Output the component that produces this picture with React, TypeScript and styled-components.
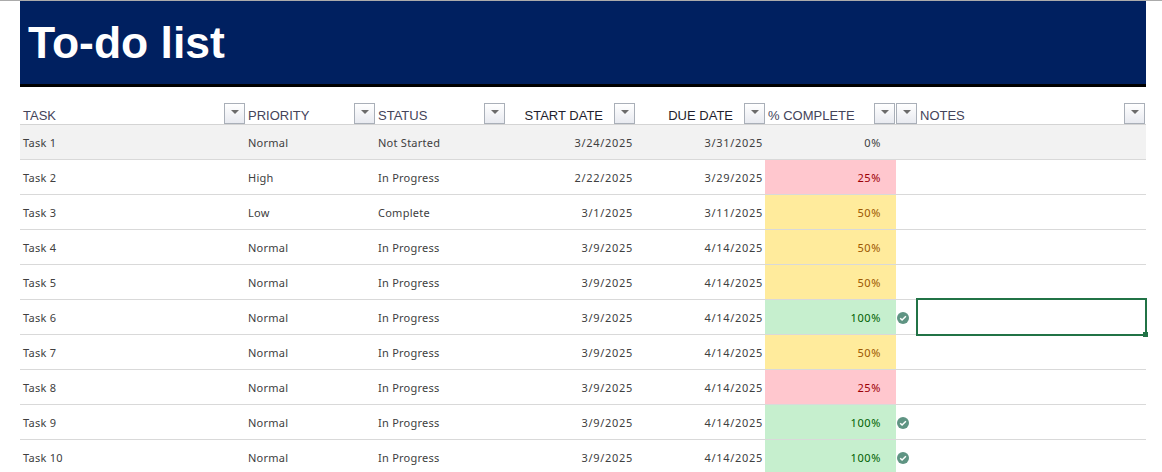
import React from 'react'
import styled, { createGlobalStyle } from 'styled-components'

const GlobalStyle = createGlobalStyle`
  html, body {
    margin: 0;
    padding: 0;
    background: #fff;
    overflow: hidden;
  }
`

const columns = '225px 130px 130px 130px 130px 131px 21px 229px'

const Page = styled.div`
  width: 1162px;
  height: 472px;
  overflow: hidden;
  background: #fff;
  border-top: 1px solid #ababab;
  box-sizing: border-box;
  position: relative;
`

const Sheet = styled.div`
  width: 1126px;
  margin-left: 20px;
`

const ActiveTab = styled.div`
  position: absolute;
  top: -1px;
  left: 917px;
  width: 229px;
  height: 1px;
  background: #217346;
`

const Banner = styled.div`
  height: 83px;
  box-sizing: content-box;
  background: #002060;
  border-bottom: 3px solid #000;
  display: flex;
  align-items: center;
  padding-left: 8px;
`

const Title = styled.h1`
  margin: 2px 0 0;
  color: #fff;
  font: bold 44.5px/1 'Liberation Sans', Arial, sans-serif;
`

const HeaderRow = styled.div`
  display: grid;
  grid-template-columns: ${columns};
  height: 38px;
  border-bottom: 1px solid #d4d4d4;
  box-sizing: border-box;
`

const HeaderCell = styled.div<{ $right?: boolean }>`
  position: relative;
  display: flex;
  align-items: flex-end;
  justify-content: ${({ $right }) => ($right ? 'flex-end' : 'flex-start')};
  padding: ${({ $right }) => ($right ? '0 32px 0 0' : '0 0 0 3px')};
  font: 13px/17px 'Liberation Sans', Arial, sans-serif;
  color: ${({ $right }) => ($right ? '#1f1f2e' : '#44445a')};
`

const FilterButton = styled.div<{ $inset?: boolean }>`
  position: absolute;
  right: ${({ $inset }) => ($inset ? '1px' : '0')};
  bottom: 0;
  width: 21px;
  height: 21px;
  box-sizing: border-box;
  border: 1px solid #a9afb8;
  background: linear-gradient(#ffffff, #e8eaf0);
  display: flex;
  align-items: center;
  justify-content: center;
  padding-bottom: 3px;
  &::after {
    content: '';
    border-left: 4px solid transparent;
    border-right: 4px solid transparent;
    border-top: 4px solid #6b6b6b;
  }
`

const Row = styled.div<{ $shaded?: boolean }>`
  display: grid;
  grid-template-columns: ${columns};
  height: 35px;
  box-sizing: border-box;
  border-bottom: 1px solid #d9d9d9;
  background: ${({ $shaded }) => ($shaded ? '#f2f2f2' : '#fff')};
`

const Cell = styled.div`
  display: flex;
  align-items: center;
  padding: 0 0 0 3px;
  font: 11px/1 'Noto Sans', 'Open Sans', sans-serif;
  letter-spacing: 0.25px;
  color: #404040;
`

const DateCell = styled(Cell)`
  justify-content: flex-end;
  padding: 0 2px 0 0;
  letter-spacing: 0.7px;
`

const tones = {
  none: { bg: 'transparent', fg: '#404040' },
  low: { bg: '#ffc7ce', fg: '#9c0006' },
  mid: { bg: '#ffeb9c', fg: '#9c5700' },
  done: { bg: '#c6efce', fg: '#006100' },
}

type Tone = keyof typeof tones

const PercentCell = styled(Cell)<{ $tone: Tone }>`
  justify-content: flex-end;
  padding: 0 15px 0 0;
  letter-spacing: 0.6px;
  background: ${({ $tone }) => tones[$tone].bg};
  color: ${({ $tone }) => tones[$tone].fg};
`

const IconCell = styled.div`
  display: flex;
  align-items: center;
  padding: 2px 0 0 1px;
`

const NotesCell = styled.div<{ $selected?: boolean }>`
  position: relative;
  ${({ $selected }) =>
    $selected &&
    `
    &::before {
      content: '';
      position: absolute;
      top: -2px;
      left: -1px;
      right: -1px;
      bottom: -2px;
      border: 2px solid #217346;
    }
    &::after {
      content: '';
      position: absolute;
      right: -2px;
      bottom: -3px;
      width: 5px;
      height: 5px;
      background: #217346;
    }
  `}
`

const CheckIcon = () => (
  <svg width="12" height="12" viewBox="0 0 12 12">
    <circle cx="6" cy="6" r="6" fill="#5f9483" />
    <path d="M3.2 6.2 5.1 8 8.9 4.3" fill="none" stroke="#fff" strokeWidth="1.5" />
  </svg>
)

const headers = ['TASK', 'PRIORITY', 'STATUS', 'START DATE', 'DUE DATE', '% COMPLETE']

const tasks = [
  { name: 'Task 1', priority: 'Normal', status: 'Not Started', start: '3/24/2025', due: '3/31/2025', pct: 0 },
  { name: 'Task 2', priority: 'High', status: 'In Progress', start: '2/22/2025', due: '3/29/2025', pct: 25 },
  { name: 'Task 3', priority: 'Low', status: 'Complete', start: '3/1/2025', due: '3/11/2025', pct: 50 },
  { name: 'Task 4', priority: 'Normal', status: 'In Progress', start: '3/9/2025', due: '4/14/2025', pct: 50 },
  { name: 'Task 5', priority: 'Normal', status: 'In Progress', start: '3/9/2025', due: '4/14/2025', pct: 50 },
  { name: 'Task 6', priority: 'Normal', status: 'In Progress', start: '3/9/2025', due: '4/14/2025', pct: 100 },
  { name: 'Task 7', priority: 'Normal', status: 'In Progress', start: '3/9/2025', due: '4/14/2025', pct: 50 },
  { name: 'Task 8', priority: 'Normal', status: 'In Progress', start: '3/9/2025', due: '4/14/2025', pct: 25 },
  { name: 'Task 9', priority: 'Normal', status: 'In Progress', start: '3/9/2025', due: '4/14/2025', pct: 100 },
  { name: 'Task 10', priority: 'Normal', status: 'In Progress', start: '3/9/2025', due: '4/14/2025', pct: 100 },
]

const toneFor = (pct: number): Tone => {
  if (pct === 0) return 'none'
  if (pct === 25) return 'low'
  if (pct === 50) return 'mid'
  return 'done'
}

const App = () => (
  <Page>
    <GlobalStyle />
    <ActiveTab />
    <Sheet>
      <Banner>
        <Title>To-do list</Title>
      </Banner>
      <HeaderRow>
        {headers.map((label, i) => (
          <HeaderCell key={label} $right={i === 3 || i === 4}>
            {label}
            <FilterButton $inset={i === 5} />
          </HeaderCell>
        ))}
        <HeaderCell>
          <FilterButton />
        </HeaderCell>
        <HeaderCell>
          NOTES
          <FilterButton $inset />
        </HeaderCell>
      </HeaderRow>
      {tasks.map((task) => (
        <Row key={task.name} $shaded={task.name === 'Task 1'}>
          <Cell>{task.name}</Cell>
          <Cell>{task.priority}</Cell>
          <Cell>{task.status}</Cell>
          <DateCell>{task.start}</DateCell>
          <DateCell>{task.due}</DateCell>
          <PercentCell $tone={toneFor(task.pct)}>{task.pct}%</PercentCell>
          <IconCell>{task.pct === 100 && <CheckIcon />}</IconCell>
          <NotesCell $selected={task.name === 'Task 6'} />
        </Row>
      ))}
    </Sheet>
  </Page>
)

export default App
